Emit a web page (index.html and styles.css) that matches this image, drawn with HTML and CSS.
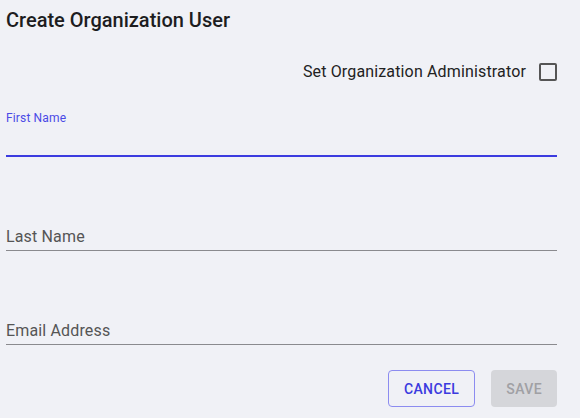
FILE: index.html
```html
<!DOCTYPE html>
<html lang="en">
<head>
    <meta charset="UTF-8">
    <meta name="viewport" content="width=device-width, initial-scale=1.0">
    <title>Create Organization User</title>
    <link rel="stylesheet" href="styles.css">
</head>
<body>

<div class="dialog">
    <h2 class="dialog-title">Create Organization User</h2>

    <label class="admin-row">
        <span>Set Organization Administrator</span>
        <span class="checkbox"></span>
    </label>

    <div class="field field-focused">
        <label class="field-label">First Name</label>
        <div class="field-input"></div>
    </div>

    <div class="field">
        <label class="field-label">Last Name</label>
        <div class="field-input"></div>
    </div>

    <div class="field">
        <label class="field-label">Email Address</label>
        <div class="field-input"></div>
    </div>

    <div class="actions">
        <button class="btn btn-outline">Cancel</button>
        <button class="btn btn-disabled" disabled>Save</button>
    </div>
</div>

</body>
</html>
```

FILE: styles.css
```css
body {
    font-family: Roboto, 'Liberation Sans', sans-serif;
    margin: 0;
    padding: 0;
    background-color: #f0f1f6;
    color: #222;
}
.dialog {
    width: 551px;
    padding: 0 0 0 6px;
    display: flex;
    flex-direction: column;
}
.dialog-title {
    font-size: 20px;
    font-weight: 500;
    margin: 8px 0 0;
    line-height: 24px;
    color: #1d1d1f;
}
.admin-row {
    display: flex;
    justify-content: flex-end;
    align-items: center;
    margin-top: 30px;
    font-size: 16px;
    letter-spacing: 0.15px;
    color: #222;
}
.checkbox {
    width: 14px;
    height: 14px;
    border: 2px solid #555;
    border-radius: 2px;
    margin-left: 13px;
}
/* text fields */
.field {
    display: flex;
    flex-direction: column;
}
.field-label {
    font-size: 16px;
    letter-spacing: 0.15px;
    color: #555;
    line-height: 20px;
    padding-bottom: 3px;
}
.field-input {
    border-bottom: 1px solid #8a8a8e;
}
.field-focused {
    margin-top: 30px;
}
.field-focused .field-label {
    font-size: 12px;
    color: #4a4ae6;
    line-height: 14px;
    padding-bottom: 0;
}
.field-focused .field-input {
    height: 30px;
    border-bottom: 2px solid #3b3bdf;
}
.field + .field {
    margin-top: 70px;
}
.actions {
    display: flex;
    justify-content: flex-end;
    gap: 16px;
    margin-top: 25px;
}
.btn {
    font-family: Roboto, 'Liberation Sans', sans-serif;
    font-size: 14px;
    font-weight: 500;
    text-transform: uppercase;
    letter-spacing: 0.4px;
    height: 37px;
    border-radius: 4px;
    padding: 0 15px;
}
.btn-outline {
    background: transparent;
    border: 1px solid #8c8cf0;
    color: #3b3bdf;
}
.btn-disabled {
    background-color: #d5d6da;
    border: none;
    color: #a0a0a4;
}
```
